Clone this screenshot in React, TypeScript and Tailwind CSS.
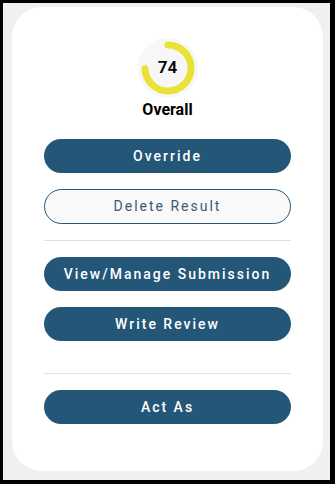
const font = { fontFamily: "Roboto, 'Noto Sans', sans-serif" };

function Ring({ value }: { value: number }) {
  const r = 23;
  const c = 2 * Math.PI * r;
  return (
    <div className="relative w-[60px] h-[60px]">
      <svg width="60" height="60" viewBox="0 0 60 60">
        <circle cx="30" cy="30" r="30" fill="#f7f7f7" />
        <circle
          cx="30"
          cy="30"
          r={r}
          fill="none"
          stroke="#e9e336"
          strokeWidth="7"
          strokeLinecap="round"
          strokeDasharray={`${(c * value) / 100} ${c}`}
          transform="rotate(-90 30 30)"
        />
      </svg>
      <div className="absolute inset-0 flex items-center justify-center text-[17px] font-semibold text-black">
        {value}
      </div>
    </div>
  );
}

function Btn({ label, outline }: { label: string; outline?: boolean }) {
  return (
    <button
      className={
        outline
          ? "w-full h-[35px] rounded-full border border-[#245678] bg-[#f9f9f9] text-[#3d5870] text-[14px] tracking-[2px]"
          : "w-full h-[34px] rounded-full bg-[#245678] text-white text-[14px] font-medium tracking-[2px]"
      }
    >
      {label}
    </button>
  );
}

export default function App() {
  return (
    <div className="w-[335px] h-[484px] bg-black pl-[3px] pt-[3px] pr-[5px] pb-[4px]" style={font}>
      <div className="h-full bg-[#f0f0f0] pl-[9px] pt-[4px]">
        <div className="w-[311px] h-[464px] bg-white rounded-[30px] px-8 pt-[31px] flex flex-col items-center">
          <Ring value={74} />
          <div className="mt-[2px] text-[16px] font-bold text-black leading-5">Overall</div>
          <div className="w-full mt-[19px] flex flex-col">
            <Btn label="Override" />
            <div className="mt-4">
              <Btn label="Delete Result" outline />
            </div>
            <div className="my-4 h-px bg-[#e0e0e0]" />
            <Btn label="View/Manage Submission" />
            <div className="mt-4">
              <Btn label="Write Review" />
            </div>
            <div className="mt-8 mb-4 h-px bg-[#e0e0e0]" />
            <Btn label="Act As" />
          </div>
        </div>
      </div>
    </div>
  );
}
